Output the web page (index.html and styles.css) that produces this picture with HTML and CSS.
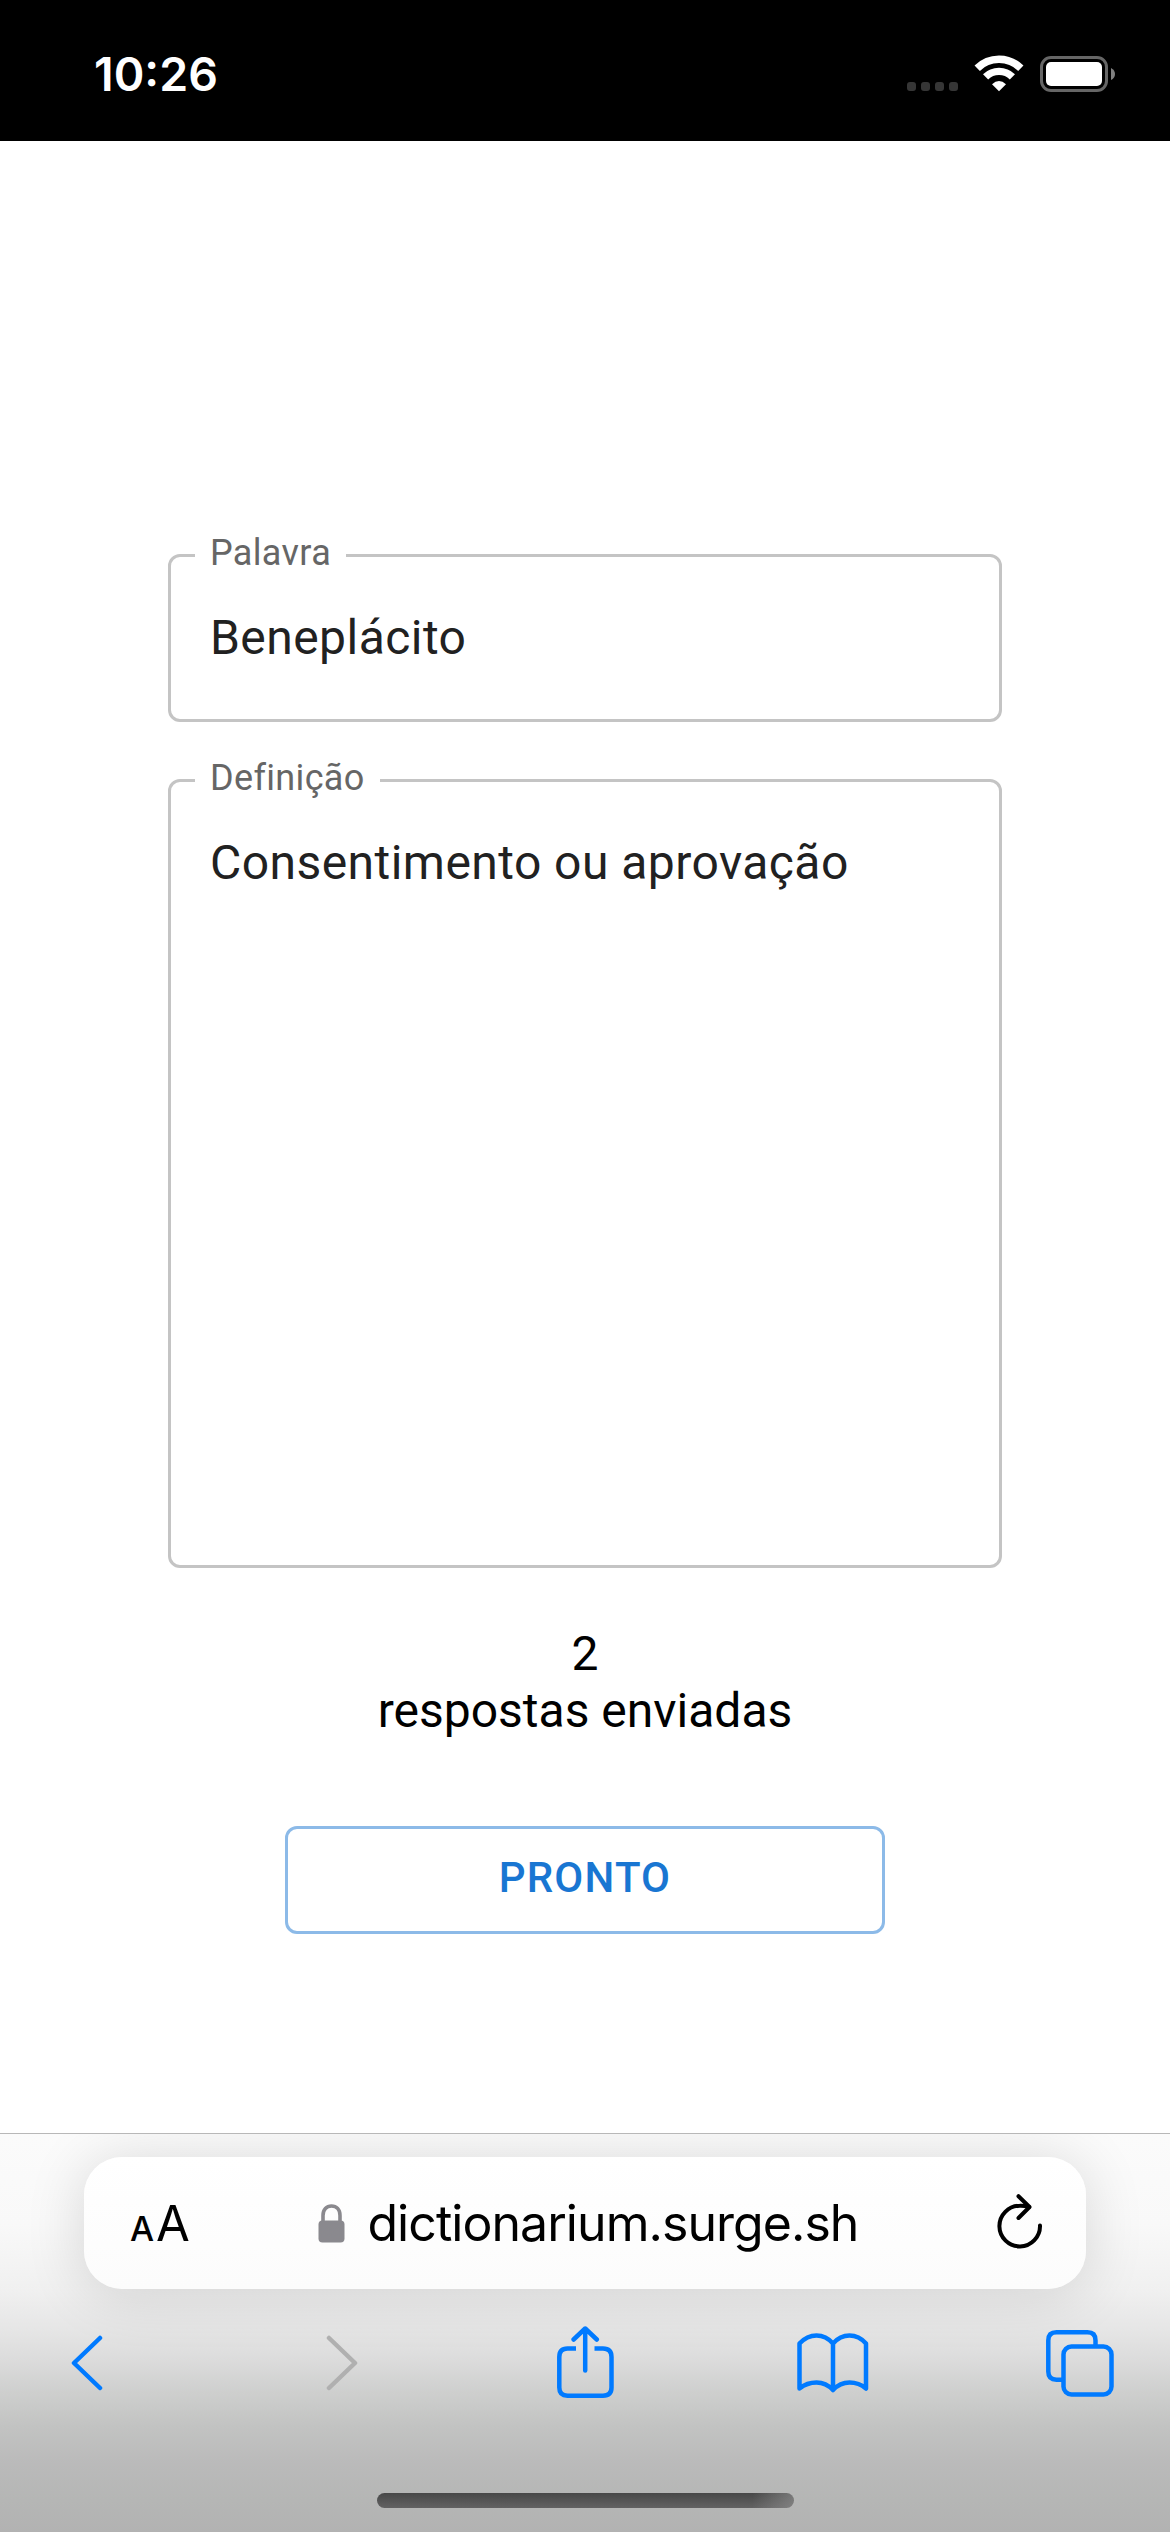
FILE: index.html
```html
<!DOCTYPE html>
<html lang="pt-BR">
<head>
<meta charset="utf-8">
<title>Dictionarium</title>
<link rel="stylesheet" href="styles.css">
</head>
<body>
<div class="screen">
  <header class="status">
    <span class="clock">10:26</span>
    <div class="indicators">
      <svg class="dots" width="51" height="9" viewBox="0 0 51 9" fill="#363636"><rect width="9" height="9" rx="3"/><rect x="14" width="9" height="9" rx="3"/><rect x="28" width="9" height="9" rx="3"/><rect x="42" width="9" height="9" rx="3"/></svg>
      <svg class="wifi" width="50" height="37" viewBox="0 0 50 37" fill="none" stroke="#fff"><path d="M3.2 13.2A31 31 0 0 1 46.8 13.2" stroke-width="7.6"/><path d="M11.6 21.8A19.2 19.2 0 0 1 38.4 21.8" stroke-width="7.4"/><path d="M25 36.3 18 29.2Q25 22.8 32 29.2Z" fill="#fff" stroke="none"/></svg>
      <svg class="battery" width="76" height="36" viewBox="0 0 76 36"><rect x="1.5" y="1.5" width="65" height="33" rx="9.5" fill="none" stroke="#666" stroke-width="3"/><rect x="6" y="6" width="56" height="24" rx="5" fill="#fff"/><path d="M71 12Q75 14 75 18T71 24Z" fill="#808080"/></svg>
    </div>
  </header>

  <main class="page">
    <fieldset class="field field-word">
      <legend>Palavra</legend>
      <input class="control" type="text" value="Beneplácito" aria-label="Palavra">
    </fieldset>
    <fieldset class="field field-definition">
      <legend>Definição</legend>
      <textarea class="control" aria-label="Definição">Consentimento ou aprovação</textarea>
    </fieldset>
    <p class="count">2<br>respostas enviadas</p>
    <button class="ready" type="button">PRONTO</button>
  </main>

  <footer class="browser">
    <div class="address">
      <span class="reader"><span class="small-a">A</span><span class="big-a">A</span></span>
      <div class="site">
        <svg width="27" height="39" viewBox="0 0 27 39"><path d="M5 19V11.500C5 5.500 8.500 2 13.500 2S22 5.500 22 11.500V19" fill="none" stroke="#8a898e" stroke-width="3.6"/><rect x=".5" y="16.500" width="26" height="22" rx="4" fill="#8a898e"/></svg>
        <span class="url">dictionarium.surge.sh</span>
      </div>
      <svg class="reload" width="46" height="56" viewBox="0 0 46 56" fill="none" stroke="#000" stroke-width="4" stroke-linecap="round" stroke-linejoin="round"><path d="M43 32.500A20.300 20.300 0 1 1 22.700 12.800Q27 12.600 32 14"/><path d="M21.500 3.200 32.500 14 21.500 25"/></svg>
    </div>
    <nav class="tools">
      <svg class="back" width="32" height="56" viewBox="0 0 32 56"><path d="M29 3 3 28 29 53"/></svg>
      <svg class="forward" width="32" height="56" viewBox="0 0 32 56"><path d="M3 3 29 28 3 53"/></svg>
      <svg class="share" width="57" height="72" viewBox="0 0 57 72"><path d="M19 22.500H10.500Q2.300 22.500 2.300 31V61.500Q2.300 69.700 10.500 69.700H46Q54.500 69.700 54.500 61.500V31Q54.500 22.500 46 22.500H37.500" stroke-linecap="butt"/><path d="M28.200 44.500V2.500M16.600 13.500 28.200 2.500 39.800 13.500"/></svg>
      <svg class="book" width="72" height="60" viewBox="0 0 72 60"><path d="M36 57V10.500Q29 2.500 19.500 2.500T2.500 10.500V55.500Q10 49.500 19.500 49.500T36 57Q43 49.500 52.500 49.500T69 55.500V10.500Q62 2.500 52.500 2.500T36 10.500"/></svg>
      <svg class="tabs" width="68" height="67" viewBox="0 0 68 67"><path d="M17.500 49.700H10.500Q2.300 49.700 2.300 41.500V10.500Q2.300 2.300 10.500 2.300H41.500Q49.500 2.300 49.500 10.500V16.500" stroke-linecap="butt"/><rect x="17.500" y="16.500" width="48" height="48" rx="8"/></svg>
    </nav>
    <div class="home-bar"></div>
  </footer>
</div>
</body>
</html>
```
FILE: styles.css
```css
* { box-sizing: border-box; }

body {
  margin: 0;
  background: #fff;
}

.screen {
  display: flex;
  flex-direction: column;
  width: 1170px;
  height: 2532px;
  overflow: hidden;
  font-family: Roboto, "Liberation Sans", sans-serif;
}

/* Status bar */
.status {
  display: flex;
  justify-content: space-between;
  flex: 0 0 141px;
  padding: 0 54px 0 94px;
  background: #000;
  color: #fff;
}

.clock {
  margin-top: 45px;
  font: 600 46.5px/58px Inter, sans-serif;
  letter-spacing: 0;
}

.indicators {
  display: flex;
  align-items: flex-end;
  height: 92px;
}

.dots { margin: 0 16px 1px 0; }
.wifi { margin-right: 16px; }

/* Form */
.page {
  display: flex;
  flex-direction: column;
  align-items: center;
  flex: 1;
  padding-top: 391px;
}

.field {
  width: 834px;
  min-width: 0;
  margin: 0;
  padding: 0 24px;
  border: 3px solid #c4c4c4;
  border-radius: 12px;
}

.field-word { height: 190px; }

.field-definition {
  height: 811px;
  margin-top: 35px;
}

.field legend {
  padding: 0 15px 5px;
  color: #666;
  font-size: 36px;
  line-height: 42px;
  letter-spacing: 0.34px;
}

.control {
  display: block;
  width: 100%;
  margin: 31px 0 0;
  padding: 0 15px;
  border: 0;
  outline: 0;
  background: transparent;
  color: #212121;
  font: 48px/56px Roboto, "Liberation Sans", sans-serif;
  letter-spacing: 0.45px;
}

textarea.control {
  height: 690px;
  resize: none;
  overflow: hidden;
}

.count {
  margin: 57px 0 0;
  color: #000;
  font-size: 48px;
  line-height: 57px;
  text-align: center;
}

.ready {
  width: 600px;
  height: 108px;
  margin-top: 87px;
  padding: 0 0 5px;
  border: 3px solid #8cbae8;
  border-radius: 12px;
  background: transparent;
  color: #1976d2;
  font: 500 42px/73px Roboto, "Liberation Sans", sans-serif;
  letter-spacing: 1.2px;
}

/* Browser toolbar */
.browser {
  display: flex;
  flex-direction: column;
  align-items: center;
  flex: 0 0 399px;
  padding-top: 23px;
  overflow: hidden;
  border-top: 1px solid #b8b8b8;
  background: linear-gradient(#fbfbfb 0, #f9f9f9 90px, #f0f0f0 156px, #e5e5e5 198px, #dadada 230px, #cecfce 258px, #c2c3c2 292px, #bababa 330px, #b5b6b5 366px, #b2b2b2 399px);
}

.address {
  display: flex;
  align-items: center;
  justify-content: space-between;
  width: 1002px;
  height: 132px;
  padding: 0 43px 0 46px;
  border-radius: 38px;
  background: linear-gradient(#fff, #fcfcfc);
  box-shadow: 0 4px 60px rgba(0, 0, 0, 0.14);
}

.reader {
  display: flex;
  align-items: baseline;
  gap: 2px;
  font-family: Inter, sans-serif;
  color: #000;
}

.small-a {
  font-size: 34px;
  font-weight: 500;
}

.big-a { font-size: 49px; }

.site {
  display: flex;
  align-items: center;
  gap: 22px;
  margin-right: 10px;
}

.url {
  color: #000;
  font: 50px/64px Inter, sans-serif;
  letter-spacing: -0.95px;
}

.reload { margin-top: -4px; }

.tools {
  display: flex;
  align-items: center;
  flex-shrink: 0;
  width: 100%;
  height: 76px;
  margin-top: 36px;
  padding-left: 71px;
}

.tools svg {
  flex-shrink: 0;
  fill: none;
  stroke: #007aff;
  stroke-width: 4.5;
  stroke-linecap: round;
  stroke-linejoin: round;
}

.tools .back { margin-right: 223px; }

.tools .forward {
  margin-right: 199px;
  stroke: #b0b0b0;
}

.tools .share {
  margin: -2px 183px 0 0;
}

.tools .book { margin-right: 177px; }

.home-bar {
  width: 417px;
  height: 15px;
  margin-top: 92px;
  border-radius: 8px;
  background: linear-gradient(90deg, transparent 90%, rgba(150, 150, 150, 0.6)), linear-gradient(#484848, #626262);
}
```
